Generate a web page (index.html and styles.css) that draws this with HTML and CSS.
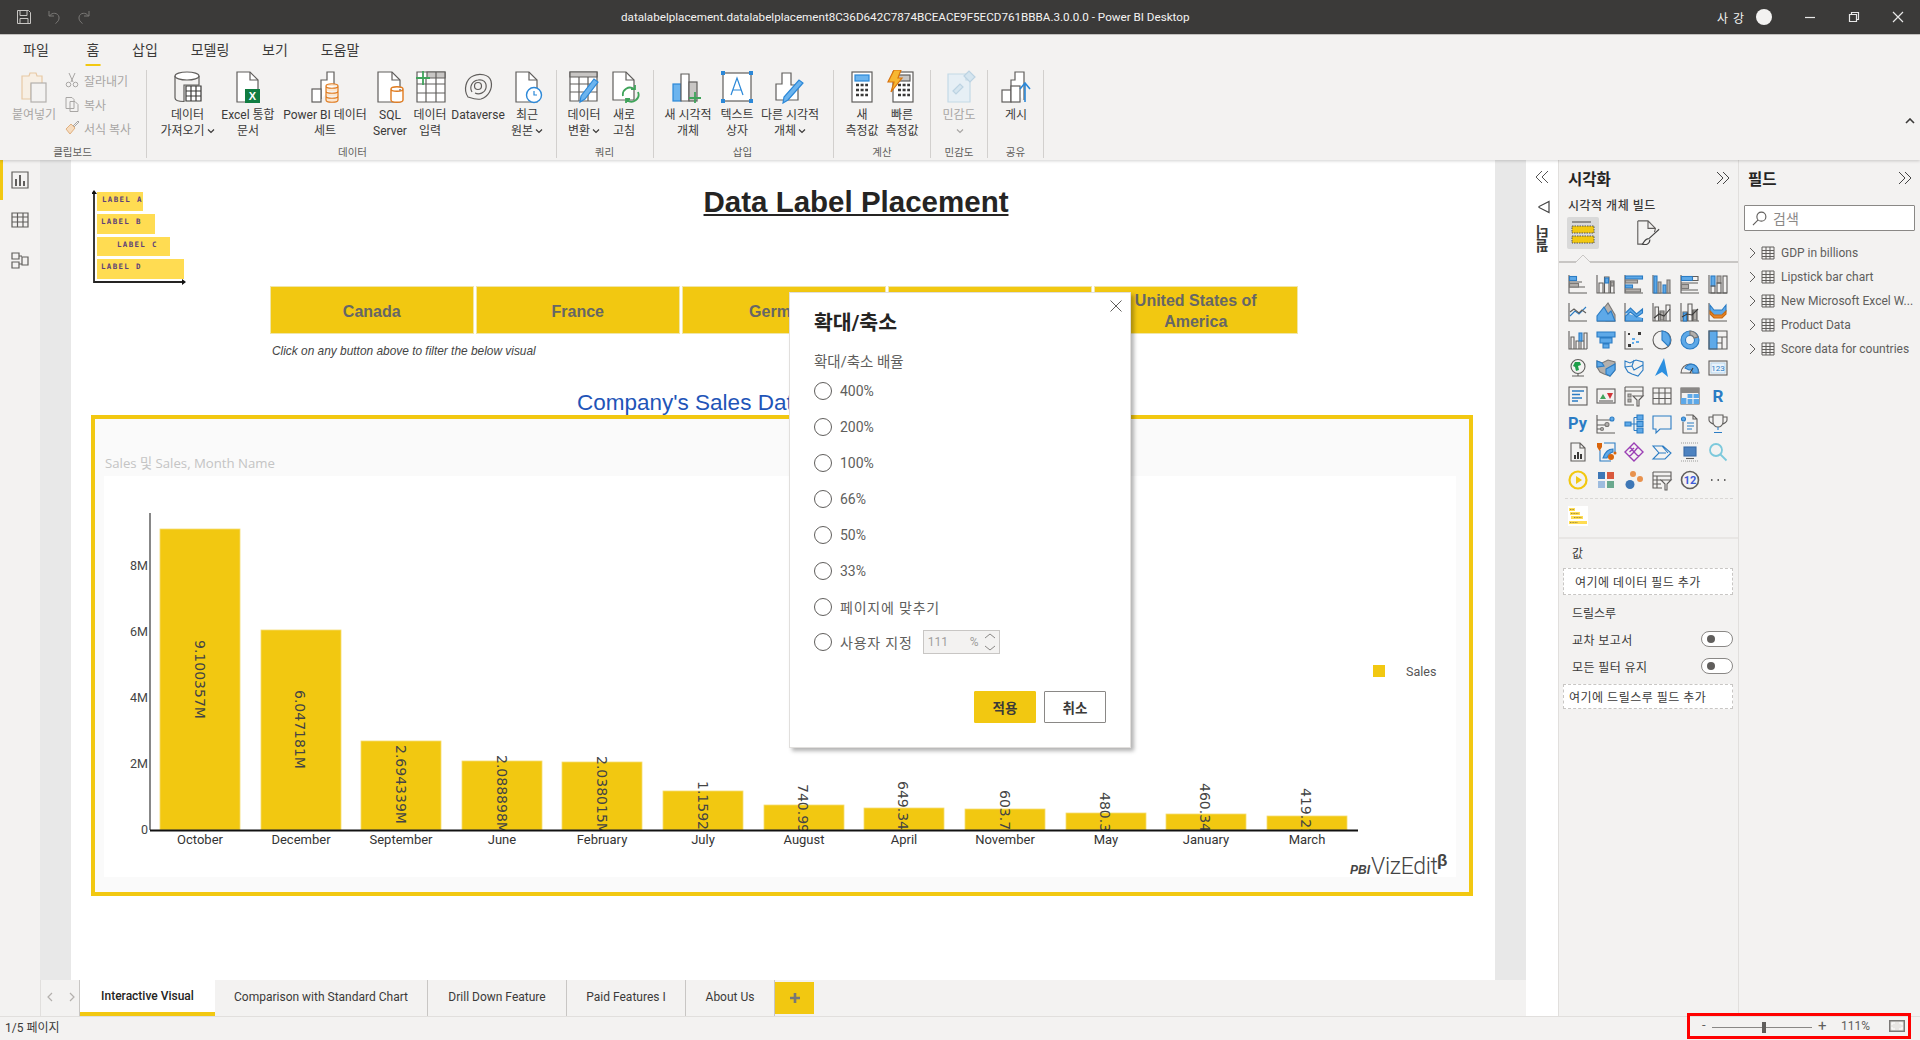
FILE: index.html
```html
<!DOCTYPE html>
<html lang="ko">
<head>
<meta charset="utf-8">
<title>Power BI Desktop</title>
<link rel="stylesheet" href="styles.css">
</head>
<body>
<div class="app">
  <header class="titlebar">
    <div class="qat">
      <svg class="tbi" viewBox="0 0 16 16"><path d="M1.5 1.5h11l2 2v11h-13zM4 1.5v5h7v-5M4 14.500v-5h8v5"/></svg>
      <svg class="tbi dim" viewBox="0 0 16 16"><path d="M3 2v5h5M3.500 7C6 3 12 3.500 13 8c.5 3-1.500 5-3.500 6.500"/></svg>
      <svg class="tbi dim" viewBox="0 0 16 16"><path d="M13 2v5H8M12.500 7C10 3 4 3.500 3 8c-.5 3 1.500 5 3.500 6.500"/></svg>
    </div>
    <div class="doc">datalabelplacement.datalabelplacement8C36D642C7874BCEACE9F5ECD761BBBA.3.0.0.0 - Power BI Desktop</div>
    <div class="win">
      <span class="user">사 강</span>
      <span class="avatar"></span>
      <svg class="wb first" viewBox="0 0 12 12"><path d="M1 6.500h10"/></svg>
      <svg class="wb" viewBox="0 0 12 12"><path d="M1.500 3.500h7v7h-7zM3.500 3.500v-2h7v7h-2"/></svg>
      <svg class="wb" viewBox="0 0 12 12"><path d="M1 1l10 10M11 1L1 11"/></svg>
    </div>
  </header>

  <section class="ribbon">
    <nav class="rtabs">
      <span class="t1">파일</span><span class="t2 on">홈</span><span class="t3">삽입</span><span class="t4">모델링</span><span class="t5">보기</span><span class="t6">도움말</span>
    </nav>
    <div class="groups">
      <div class="grp g-clip">
        <div class="btns">
          <div class="rb w60 off">
            <svg class="ri" viewBox="0 0 34 34"><path class="pale" d="M5 6h7l1-3h6l1 3h5v8H14v15H5z"/><rect class="paleb" x="14" y="13" width="15" height="19"/></svg>
            <span>붙여넣기</span>
          </div>
          <div class="small">
            <div class="si"><svg viewBox="0 0 16 16"><path d="M5 1l4 9M11 1L7 10"/><circle cx="4.500" cy="12.500" r="2.300"/><circle cx="11.500" cy="12.500" r="2.300"/></svg><span>잘라내기</span></div>
            <div class="si"><svg viewBox="0 0 16 16"><path d="M2 1.500h6l2 2v9H2zM6 5.500h5l3 3v7H6z"/></svg><span>복사</span></div>
            <div class="si"><svg viewBox="0 0 16 16"><path class="paleo" d="M2 9l5-5 4 4-5 6z"/><path d="M9 6l5-5 1 1-5 5"/></svg><span>서식 복사</span></div>
          </div>
        </div>
        <div class="glabel">클립보드</div>
      </div>

      <div class="grp g-data">
        <div class="btns">
          <div class="rb w61">
            <svg class="ri" viewBox="0 0 34 34"><path d="M4 6v22c0 2.500 4 3.500 9 3.500V15h15V6"/><ellipse class="w" cx="16" cy="6" rx="12" ry="4"/><path class="dk" d="M15 16h15v15H15zM15 21h15M15 26h15M20 16v15M25 16v15"/></svg>
            <span>데이터<br>가져오기<svg class="chev" viewBox="0 0 8 8"><path d="M1 2.500l3 3 3-3"/></svg></span>
          </div>
          <div class="rb w60">
            <svg class="ri" viewBox="0 0 34 34"><path class="w" d="M6 2h13l8 8v22H6z"/><path d="M19 2v8h8"/><rect class="xl" x="14" y="19" width="15" height="14"/><text class="xlt" x="21.500" y="30">X</text></svg>
            <span>Excel 통합<br>문서</span>
          </div>
          <div class="rb w94">
            <svg class="ri" viewBox="0 0 34 34"><path class="w" d="M13 29V10h6V2h7v14"/><rect class="w" x="4" y="19" width="9" height="13"/><path class="or" d="M18 16c0-3 12-3 12 0v14c0 3-12 3-12 0zM18 16c0 3 12 3 12 0M18 21c0 3 12 3 12 0M18 26c0 3 12 3 12 0"/></svg>
            <span>Power BI 데이터<br>세트</span>
          </div>
          <div class="rb w36">
            <svg class="ri" viewBox="0 0 34 34"><path class="w" d="M5 2h14l8 8v22H5z"/><path d="M19 2v8h8"/><path class="orw" d="M18 19c0-3 12-3 12 0v11c0 3-12 3-12 0zM18 19c0 3 12 3 12 0"/></svg>
            <span>SQL<br>Server</span>
          </div>
          <div class="rb w44">
            <svg class="ri" viewBox="0 0 34 34"><path class="w" d="M4 2h28v30H4z"/><path class="gf" d="M14 2h18v6H14z"/><path d="M4 14h28M4 23h28M13 8v24M23 2v30"/><path class="gr" d="M10 1v14M3 8h14"/></svg>
            <span>데이터<br>입력</span>
          </div>
          <div class="rb w52">
            <svg class="ri" viewBox="0 0 34 34"><path d="M7 27C2 20 5 9 12 6c6-3 16-2 18 5 2 8-3 16-10 18-5 1-10-1-13-2z"/><path d="M11 22c-3-5 0-11 6-12 5-1 9 2 8 8-1 5-7 7-11 5"/><circle cx="17" cy="16" r="3.500"/></svg>
            <span>Dataverse</span>
          </div>
          <div class="rb w46">
            <svg class="ri" viewBox="0 0 34 34"><path class="w" d="M6 2h13l8 8v22H6z"/><path d="M19 2v8h8"/><circle class="blc" cx="24" cy="25" r="7.500"/><path class="bl" d="M24 21v4h3"/></svg>
            <span>최근<br>원본<svg class="chev" viewBox="0 0 8 8"><path d="M1 2.500l3 3 3-3"/></svg></span>
          </div>
        </div>
        <div class="glabel">데이터</div>
      </div>

      <div class="grp g-query">
        <div class="btns">
          <div class="rb w40">
            <svg class="ri" viewBox="0 0 34 34"><path class="w" d="M3 2h27v29H3z"/><path class="gf" d="M3 2h27v5H3z"/><path d="M3 14h27M3 22h27M12 7v24M21 7v24"/><path class="blf" d="M13 32l1-6L27 9l4 3-13 17z"/></svg>
            <span>데이터<br>변환<svg class="chev" viewBox="0 0 8 8"><path d="M1 2.500l3 3 3-3"/></svg></span>
          </div>
          <div class="rb w40">
            <svg class="ri" viewBox="0 0 34 34"><path class="w" d="M6 2h13l8 8v20H6z"/><path d="M19 2v8h8"/><path class="gr" d="M16 26a7 7 0 0 1 11-7M31 22a7 7 0 0 1-11 8M28 15v4h-4M19 33v-4h4"/></svg>
            <span>새로<br>고침</span>
          </div>
        </div>
        <div class="glabel">쿼리</div>
      </div>

      <div class="grp g-ins">
        <div class="btns">
          <div class="rb w56">
            <svg class="ri" viewBox="0 0 34 34"><rect class="blf" x="2" y="14" width="8" height="17"/><path class="w" d="M10 31V4h8v27z"/><rect class="gf" x="18" y="12" width="8" height="19"/><path class="gr" d="M24 22v11M18 28h12"/></svg>
            <span>새 시각적<br>개체</span>
          </div>
          <div class="rb w42">
            <svg class="ri" viewBox="0 0 34 34"><rect class="w" x="3" y="3" width="28" height="28"/><path class="bl" d="M11 25l6-17 6 17M13 20h8"/><path class="bsq" d="M1 1h4v4H1zM29 1h4v4h-4zM1 29h4v4H1zM29 29h4v4h-4z"/></svg>
            <span>텍스트<br>상자</span>
          </div>
          <div class="rb w64">
            <svg class="ri" viewBox="0 0 34 34"><path class="w" d="M3 30V14h6V3h9v12h7v15z"/><path class="blf" d="M10 33l1-6L26 10l4 3-15 17z"/></svg>
            <span>다른 시각적<br>개체<svg class="chev" viewBox="0 0 8 8"><path d="M1 2.500l3 3 3-3"/></svg></span>
          </div>
        </div>
        <div class="glabel">삽입</div>
      </div>

      <div class="grp g-calc">
        <div class="btns">
          <div class="rb w40">
            <svg class="ri" viewBox="0 0 34 34"><rect class="w" x="7" y="2" width="20" height="30"/><rect class="blf" x="10" y="5" width="14" height="6"/><path class="dots" d="M11 15h12M11 20h12M11 25h12"/></svg>
            <span>새<br>측정값</span>
          </div>
          <div class="rb w40">
            <svg class="ri" viewBox="0 0 34 34"><rect class="w" x="8" y="2" width="20" height="30"/><rect class="gf" x="12" y="5" width="13" height="6"/><path class="dots" d="M13 15h12M13 20h12M13 25h12"/><path class="bolt" d="M9 0h7l-3 8h4L6 22l3-10H3z"/></svg>
            <span>빠른<br>측정값</span>
          </div>
        </div>
        <div class="glabel">계산</div>
      </div>

      <div class="grp g-sens">
        <div class="btns">
          <div class="rb w40 off">
            <svg class="ri" viewBox="0 0 34 34"><path class="pbl" d="M6 4h18v6h4v22H6z"/><path class="pbl2" d="M22 6l5-5 6 6-5 5zM11 21l7-7 3 3-7 7z"/></svg>
            <span>민감도<br><svg class="chev" viewBox="0 0 8 8"><path d="M1 2.500l3 3 3-3"/></svg></span>
          </div>
        </div>
        <div class="glabel">민감도</div>
      </div>

      <div class="grp g-share">
        <div class="btns">
          <div class="rb w40">
            <svg class="ri" viewBox="0 0 34 34"><path class="w" d="M12 20V10h4V2h9v28"/><rect class="w" x="3" y="20" width="9" height="12"/><rect class="w" x="12" y="16" width="9" height="16"/><path class="bl2" d="M26 32V14M21 19l5-6 5 6"/></svg>
            <span>게시</span>
          </div>
        </div>
        <div class="glabel">공유</div>
      </div>
      <svg class="collapse" viewBox="0 0 10 6"><path d="M1 5l4-4 4 4"/></svg>
    </div>
  </section>

  <main class="main">
    <aside class="leftnav">
      <div class="lni on"><svg viewBox="0 0 18 18"><path class="ln" d="M1 1h16v16H1z"/><path class="lf" d="M4 8h2v7H4zM8 4h2v11H8zM12 10h2v5h-2z"/></svg></div>
      <div class="lni"><svg viewBox="0 0 18 18"><path class="ln" d="M1 2h16v14H1zM1 6h16M1 11h16M6.500 2v14M12 2v14"/></svg></div>
      <div class="lni"><svg viewBox="0 0 18 18"><path class="ln" d="M1 2h7v6H1zM1 11h7v6H1zM11 6h6v8h-6zM8 5h3M8 13h3"/></svg></div>
    </aside>

    <div class="center">
      <div class="canvas">
        <div class="page">
          <h1 class="ptitle">Data Label Placement</h1>

          <svg class="logo" viewBox="92 188 98 98">
            <rect class="ly" x="97" y="192" width="46" height="19"/>
            <rect class="ly" x="97" y="214" width="58" height="20"/>
            <rect class="ly" x="97" y="237" width="73" height="19"/>
            <rect class="ly" x="97" y="259" width="87" height="20"/>
            <path class="lax" d="M94 192v90h90"/>
            <path class="lar" d="M94 190l-3 4h6zM186 282l-4-3v6z"/>
            <text class="lt" x="102" y="202">LABEL A</text>
            <text class="lt" x="101" y="224">LABEL B</text>
            <text class="lt" x="117" y="247">LABEL C</text>
            <text class="lt" x="101" y="269">LABEL D</text>
          </svg>

          <div class="slicer">
            <button class="sb">Canada</button>
            <button class="sb">France</button>
            <button class="sb">Germany</button>
            <button class="sb">United Kingdom</button>
            <button class="sb sb-tall">United States of<br>America</button>
          </div>
          <p class="hint">Click on any button above to filter the below visual</p>
          <h2 class="ctitle">Company's Sales Data by Month</h2>

          <div class="frame">
            <svg class="chart" viewBox="95 419 1374 473">
              <defs><clipPath id="plot"><rect x="150" y="500" width="1210" height="330"/></clipPath></defs>
              <rect class="plotbg" x="104" y="476" width="1352" height="401"/>
              <text class="ctl" x="105" y="468">Sales 및 Sales, Month Name</text>
              <g class="bars">
                <rect x="160" y="529" width="80" height="301"/>
                <rect x="261" y="630" width="80" height="200"/>
                <rect x="361" y="741" width="80" height="89"/>
                <rect x="462" y="761" width="80" height="69"/>
                <rect x="562" y="762" width="80" height="68"/>
                <rect x="663" y="791" width="80" height="39"/>
                <rect x="764" y="805" width="80" height="25"/>
                <rect x="864" y="808" width="80" height="22"/>
                <rect x="965" y="809" width="80" height="21"/>
                <rect x="1066" y="813" width="80" height="17"/>
                <rect x="1166" y="814" width="80" height="16"/>
                <rect x="1267" y="816" width="80" height="14"/>
              </g>
              <path class="yaxis" d="M150 513v317"/>
              <g class="ytick">
                <text x="148" y="570">8M</text>
                <text x="148" y="636">6M</text>
                <text x="148" y="702">4M</text>
                <text x="148" y="768">2M</text>
                <text x="148" y="834">0</text>
              </g>
              <g class="dl" clip-path="url(#plot)">
                <text transform="translate(195 640) rotate(90)">9.100357M</text>
                <text transform="translate(295 690) rotate(90)">6.047181M</text>
                <text transform="translate(396 745) rotate(90)">2.694339M</text>
                <text transform="translate(497 755) rotate(90)">2.088898M</text>
                <text transform="translate(597 756) rotate(90)">2.038015M</text>
                <text transform="translate(698 781) rotate(90)">1.159234M</text>
                <text transform="translate(798 784) rotate(90)">740.9941K</text>
                <text transform="translate(898 781) rotate(90)">649.3412K</text>
                <text transform="translate(1000 790) rotate(90)">603.7124K</text>
                <text transform="translate(1100 792) rotate(90)">480.3312K</text>
                <text transform="translate(1200 783) rotate(90)">460.3421K</text>
                <text transform="translate(1301 788) rotate(90)">419.2134K</text>
              </g>
              <path class="xaxis" d="M150 830.500H1358"/>
              <g class="cat">
                <text x="200" y="844">October</text>
                <text x="301" y="844">December</text>
                <text x="401" y="844">September</text>
                <text x="502" y="844">June</text>
                <text x="602" y="844">February</text>
                <text x="703" y="844">July</text>
                <text x="804" y="844">August</text>
                <text x="904" y="844">April</text>
                <text x="1005" y="844">November</text>
                <text x="1106" y="844">May</text>
                <text x="1206" y="844">January</text>
                <text x="1307" y="844">March</text>
              </g>
              <rect class="lg" x="1373" y="665" width="12" height="12"/>
              <text class="lgt" x="1406" y="676">Sales</text>
              <text class="wm1" x="1350" y="874">PBI</text>
              <text class="wm2" x="1371" y="874">VizEdit</text>
              <text class="wm3" x="1437" y="866">β</text>
            </svg>
          </div>
        </div>
      </div>
      <div class="pagetabs">
        <div class="pnav"><svg viewBox="0 0 6 10"><path d="M5 1L1 5l4 4"/></svg><svg viewBox="0 0 6 10"><path d="M1 1l4 4-4 4"/></svg></div>
        <div class="ptab on tw1">Interactive Visual</div>
        <div class="ptab tw2">Comparison with Standard Chart</div>
        <div class="ptab tw3">Drill Down Feature</div>
        <div class="ptab tw4">Paid Features I</div>
        <div class="ptab tw5">About Us</div>
        <div class="padd"><svg viewBox="0 0 12 12"><path d="M6 1v10M1 6h10"/></svg></div>
      </div>
    </div>

    <aside class="filters">
      <svg class="fchev" viewBox="0 0 14 14"><path d="M7 1L1 7l6 6M13 1L7 7l6 6"/></svg>
      <svg class="fmega" viewBox="0 0 14 14"><path d="M12 1.500v11L2 7.500v-1z"/></svg>
      <span class="fword">필터</span>
    </aside>

    <aside class="viz">
      <div class="phead"><h3>시각화</h3><svg class="pchev" viewBox="0 0 14 14"><path d="M7 1l6 6-6 6M1 1l6 6-6 6"/></svg></div>
      <div class="vsub">시각적 개체 빌드</div>
      <div class="vbuild">
        <div class="vb on"><svg viewBox="0 0 26 26"><path class="d" d="M2 2h19"/><rect class="yb" x="2" y="6" width="22" height="7"/><rect class="yb" x="2" y="16" width="22" height="7"/></svg></div>
        <div class="vb"><svg viewBox="0 0 28 28"><path d="M3 1h11l8 8-1 4M14 1v8h8M3 1v25h6"/><path class="fbr" d="M26 10L15 20M15 20c-4 0-5 3-7 6 4 1 8 0 8-5"/></svg></div>
      </div>
      <div class="vline"><svg class="caret" viewBox="0 0 16 9"><path d="M0 9l8-8 8 8"/></svg></div>

      <div class="igrid">
        <svg viewBox="0 0 20 20"><path d="M1 1v18h18M1 8h13M1 13h16"/><rect class="b" x="1.500" y="2.500" width="7" height="4"/><rect class="g" x="1.500" y="9.500" width="9" height="3.500"/></svg>
        <svg viewBox="0 0 20 20"><path d="M1 1v18h18M3 19V9h4v10M8.500 19V3h4.500v16M14.500 19V7H18v12"/><rect class="b" x="9" y="4" width="3.500" height="5"/><rect class="g" x="15" y="8" width="2.500" height="4"/></svg>
        <svg viewBox="0 0 20 20"><path d="M1 1v18h18"/><rect class="b" x="1.500" y="2" width="17" height="3"/><rect class="g" x="1.500" y="6" width="12" height="3"/><rect class="b" x="1.500" y="11" width="7" height="3"/><rect class="g" x="1.500" y="15" width="15" height="3"/></svg>
        <svg viewBox="0 0 20 20"><path d="M1 1v18h18"/><rect class="b" x="2" y="2" width="3" height="17"/><rect class="g" x="6" y="8" width="3" height="11"/><rect class="b" x="11" y="11" width="3" height="8"/><rect class="g" x="15" y="6" width="3" height="13"/></svg>
        <svg viewBox="0 0 20 20"><path d="M1 1v18h18M1 9h17M1 16h17"/><rect class="b" x="1.500" y="2.500" width="11" height="4"/><path d="M12.500 2.500H18v4h-5.500"/><rect class="g" x="1.500" y="10.500" width="7" height="4"/></svg>
        <svg viewBox="0 0 20 20"><path d="M1 1v18h18"/><rect class="b" x="3" y="2" width="4" height="10"/><rect x="3" y="12" width="4" height="7"/><rect class="g" x="9" y="2" width="4" height="7"/><rect x="9" y="9" width="4" height="10"/><rect x="15" y="2" width="4" height="17"/></svg>

        <svg viewBox="0 0 20 20"><path d="M1 1v18h18"/><path class="l" d="M2 14l5-5 4 3 7-7"/><path d="M2 10l4-3 5 4 3-3 4 3"/></svg>
        <svg viewBox="0 0 20 20"><path d="M1 19h18"/><path class="g" d="M8 6l4-5 7 12v6H10z"/><path class="b" d="M1 19v-5l7-9 4 7 3-3 4 10z"/></svg>
        <svg viewBox="0 0 20 20"><path d="M1 1v18h18"/><path class="b" d="M1.500 11l5-5 6 6 6-5v4l-6 4-6-5-5 4v5h17v-3"/></svg>
        <svg viewBox="0 0 20 20"><path d="M1 1v18h18M3 19V5h3.500v14M8 19V9h4v10M14 19V3h4v16"/><rect class="g" x="8.500" y="10" width="3" height="8"/><path class="k" d="M2 16l5-4 5 2 6-7"/></svg>
        <svg viewBox="0 0 20 20"><path d="M1 1v18h18M3 19V10h4v9M8 19V2h4v17M13 19V8h4v11"/><rect class="b" x="3.500" y="11" width="3" height="8"/><rect class="g" x="13.500" y="9" width="3" height="9"/><path class="k" d="M2 15l5-3 5 1 6-6"/></svg>
        <svg viewBox="0 0 20 20"><path d="M1 1v18h18"/><path class="b" d="M2 3l4 5h8l4-5v6l-4 5H6L2 9z"/><path class="o" d="M2 9l4 4h8l4-4v3l-4 4H6l-4-4z"/></svg>

        <svg viewBox="0 0 20 20"><path d="M1 1v18h18M3 19V7h3v12M8 19v-8h3v8M13 19V11h3v8M16 19V3h3v16"/><rect class="b" x="11" y="3" width="3" height="8"/></svg>
        <svg viewBox="0 0 20 20"><path class="b" d="M1 2h18v5H1zM4 8h12v5H4zM7 14h6v4H7z"/></svg>
        <svg viewBox="0 0 20 20"><path d="M1 1v18h18"/><path class="kf" d="M4 3h2v2H4zM14 2h3v3h-3zM4 14h3v3H4z"/><path class="bf" d="M8 8h3v2H8zM12 11h3v2h-3zM8 12h2v2H8z"/></svg>
        <svg viewBox="0 0 20 20"><circle cx="10" cy="10" r="9"/><path class="b" d="M10 1a9 9 0 0 1 6 15l-6-6z"/></svg>
        <svg viewBox="0 0 20 20"><circle class="b" cx="10" cy="10" r="9"/><circle class="wh" cx="10" cy="10" r="4.500"/><path class="g" d="M10 1a9 9 0 0 1 8 6l-4 1a4.500 4.500 0 0 0-4-3z"/></svg>
        <svg viewBox="0 0 20 20"><rect class="b" x="1" y="1" width="8" height="18"/><path d="M1 1h18v18H1zM9 7h10M14 7v12M9 13h5"/></svg>

        <svg viewBox="0 0 20 20"><circle cx="10" cy="8.500" r="7"/><path class="gn" d="M7 4h5l1 3-3 1 1 4-3 1-1-4-2-1z"/><path d="M4 18h12M10 15.500V18"/></svg>
        <svg viewBox="0 0 20 20"><path class="g" d="M1 3l5 2 6-3 7 2v8l-5 6-6-2-4-2-3-5z"/><path class="b" d="M10 11l9-5v6l-5 6-4-2z"/><path class="b" d="M1 3l5 2 2 3-7 1z"/></svg>
        <svg viewBox="0 0 20 20"><path class="l" d="M1 3l5 2 6-3 7 2v8l-5 6-6-2-4-2-3-5zM1 9l7-1 2 4 9-5M8 8l2-6"/></svg>
        <svg viewBox="0 0 20 20"><path class="bn" d="M12 0L3 18l7-4 6 5z"/></svg>
        <svg viewBox="0 0 20 20"><path d="M1 15a9 9 0 0 1 18 0z"/><path class="b" d="M5 10a7 7 0 0 1 13 5h-5a3 3 0 0 0-4-3z"/><path d="M10 15l3-5" class="k"/></svg>
        <svg viewBox="0 0 20 20"><rect x="1" y="3" width="18" height="14"/><rect class="lb" x="3" y="5" width="14" height="10"/><text class="t123" x="10" y="13">123</text></svg>

        <svg viewBox="0 0 20 20"><rect x="1" y="1" width="18" height="18"/><path class="l2" d="M4 5h12M4 8.500h8M4 12h10M4 15h6"/></svg>
        <svg viewBox="0 0 20 20"><rect x="1" y="3" width="18" height="14"/><path class="gt" d="M4 13l3-5 3 5z"/><path class="rt" d="M11 7h6l-3 6z"/><path d="M3 15h14"/></svg>
        <svg viewBox="0 0 20 20"><path d="M1 1h18v9M1 1v18h9M1 5h18"/><path class="g" d="M4 8h3v3H4zM4 13h3v3H4z"/><path class="fn" d="M9 10h10l-4 4v6h-2v-6z"/></svg>
        <svg viewBox="0 0 20 20"><path d="M1 2h18v16H1zM1 7h18M1 12.500h18M7 2v16M13 2v16"/></svg>
        <svg viewBox="0 0 20 20"><path d="M1 2h18v16H1z"/><path class="gf2" d="M1 2h18v5H1z"/><path class="bf" d="M7 8h12v10H7zM1 12h6v6H1z"/><path class="wl" d="M7 12.500h12M13 8v10M7 8v10"/></svg>
        <svg viewBox="0 0 20 20"><text class="tr" x="10" y="16">R</text></svg>

        <svg viewBox="0 0 22 20"><text class="tpy" x="0" y="15">Py</text></svg>
        <svg viewBox="0 0 20 20"><path d="M1 1v18h18M1 6h13M1 11h8M1 15h4"/><circle class="b" cx="16" cy="5" r="2"/><circle class="g" cx="11" cy="10.500" r="2"/><circle class="g" cx="6" cy="15" r="1.500"/></svg>
        <svg viewBox="0 0 20 20"><path class="b" d="M1 8h6v4H1zM13 1h6v5h-6zM13 7.500h6v5h-6zM13 14h6v5h-6z"/><path class="l" d="M7 10h3M10 3.500V16.500M10 3.500h3M10 10h3M10 16.500h3"/></svg>
        <svg viewBox="0 0 20 20"><path class="l" d="M1 2h18v13H8l-4 4v-4H1z"/></svg>
        <svg viewBox="0 0 20 20"><path d="M3 8v11h14V5l-4-4H6M13 1v4h4"/><circle class="b" cx="3.500" cy="5" r="2"/><path class="l" d="M7 9h7M7 12h7M7 15h5"/></svg>
        <svg viewBox="0 0 20 20"><path d="M5 1h10v7a5 5 0 0 1-10 0zM5 3H1v3c0 2 2 3 4 4M15 3h4v3c0 2-2 3-4 4"/><path class="l" d="M10 13v3M6 18.500h8"/></svg>

        <svg viewBox="0 0 20 20"><path d="M3 1h9l5 5v13H3zM12 1v5h5"/><path class="kf" d="M6 13h2v4H6zM9 10h2v7H9zM12 12h2v5h-2z"/></svg>
        <svg viewBox="0 0 20 20"><path class="l" d="M4 8v11h11M8 1h11v10"/><path class="b" d="M7 16c2-6 5-9 10-9v3c-4 1-5 3-6 6z"/><path class="o2" d="M1 1h5v4L3.500 9 1 5z"/><circle class="o2" cx="15" cy="15" r="3"/><circle class="o2" cx="19" cy="11" r="1.500"/></svg>
        <svg viewBox="0 0 20 20"><path class="pp" d="M10 1l9 9-9 9-9-9zM10 1l4 4-4 5-4-5zM5.500 10L10 6M10 10l4.500 4.500-4.500 4.500-4.500-4.500z"/></svg>
        <svg viewBox="0 0 20 20"><path class="l" d="M1 4h10l8 7-6 6H1l6-6zM7 11h7M10 4l6 7"/></svg>
        <svg viewBox="0 0 20 20"><path class="dsh" d="M1 1h18M1 19h18"/><rect class="bd" x="4" y="5" width="12" height="9"/><path d="M6 16.500h8"/></svg>
        <svg viewBox="0 0 20 20"><circle class="tl" cx="8" cy="8" r="6"/><path class="tl" d="M12.500 12.500l6 6"/></svg>

        <svg viewBox="0 0 20 20"><circle class="yr" cx="10" cy="10" r="8.500"/><path class="ypl" d="M8 6l6 4-6 4z"/></svg>
        <svg viewBox="0 0 20 20"><path class="c1" d="M2 2h7v7H2z"/><path class="c2" d="M11 2h7v7h-7z"/><path class="c3" d="M2 11h7v7H2z"/><path class="c4" d="M11 11h7v7h-7z"/></svg>
        <svg viewBox="0 0 20 20"><circle class="c1" cx="6" cy="14.500" r="4.500"/><circle class="c5" cx="9" cy="4" r="3"/><circle class="c5" cx="16" cy="9" r="3"/></svg>
        <svg viewBox="0 0 20 20"><path d="M1 2h18v8M1 2v16h9M1 6h18M1 10h8M1 14h8M5 6v12"/><path class="fn2" d="M9 10h10l-4 4v6h-2v-6z"/></svg>
        <svg viewBox="0 0 20 20"><circle class="thick" cx="10" cy="10" r="8.500"/><text class="t12" x="10" y="14">12</text></svg>
        <svg viewBox="0 0 20 20"><path class="k3" d="M3 10h1.500M9.500 10h1.500M16 10h1.500"/></svg>
      </div>

      <div class="vdash"></div>
      <svg class="cvis" viewBox="0 0 20 20">
        <rect class="cw" width="20" height="20"/>
        <path class="cy" d="M1 2h6v3H1zM2 6h10v3H2zM3 10h12v3H3zM1 15h18v3H1z"/>
        <path class="cd" d="M2 3.500h4M3 7.500h8M6 11.500h8M2 16.500h8"/>
      </svg>
      <div class="vsep"></div>
      <div class="flab lab-v">값</div>
      <div class="dz dz1">여기에 데이터 필드 추가</div>
      <div class="flab lab-d">드릴스루</div>
      <div class="trow tr1"><span>교차 보고서</span><span class="tog"></span></div>
      <div class="trow tr2"><span>모든 필터 유지</span><span class="tog"></span></div>
      <div class="dz dz2">여기에 드릴스루 필드 추가</div>
    </aside>

    <aside class="fields">
      <div class="phead"><h3>필드</h3><svg class="pchev" viewBox="0 0 14 14"><path d="M7 1l6 6-6 6M1 1l6 6-6 6"/></svg></div>
      <div class="search"><svg viewBox="0 0 16 16"><circle cx="10" cy="6" r="4.800"/><path d="M6.500 9.500L1 15"/></svg><span>검색</span></div>
      <ul class="flist">
        <li><svg class="fa" viewBox="0 0 7 12"><path d="M1 1l5 5-5 5"/></svg><svg class="tb" viewBox="0 0 14 14"><path d="M1 1h12v12H1zM1 4.500h12M1 7.500h12M1 10.500h12M5 1v12M9 1v12"/></svg><span>GDP in billions</span></li>
        <li><svg class="fa" viewBox="0 0 7 12"><path d="M1 1l5 5-5 5"/></svg><svg class="tb" viewBox="0 0 14 14"><path d="M1 1h12v12H1zM1 4.500h12M1 7.500h12M1 10.500h12M5 1v12M9 1v12"/></svg><span>Lipstick bar chart</span></li>
        <li><svg class="fa" viewBox="0 0 7 12"><path d="M1 1l5 5-5 5"/></svg><svg class="tb" viewBox="0 0 14 14"><path d="M1 1h12v12H1zM1 4.500h12M1 7.500h12M1 10.500h12M5 1v12M9 1v12"/></svg><span>New Microsoft Excel W...</span></li>
        <li><svg class="fa" viewBox="0 0 7 12"><path d="M1 1l5 5-5 5"/></svg><svg class="tb" viewBox="0 0 14 14"><path d="M1 1h12v12H1zM1 4.500h12M1 7.500h12M1 10.500h12M5 1v12M9 1v12"/></svg><span>Product Data</span></li>
        <li><svg class="fa" viewBox="0 0 7 12"><path d="M1 1l5 5-5 5"/></svg><svg class="tb" viewBox="0 0 14 14"><path d="M1 1h12v12H1zM1 4.500h12M1 7.500h12M1 10.500h12M5 1v12M9 1v12"/></svg><span>Score data for countries</span></li>
      </ul>
    </aside>
  </main>

  <footer class="status"><span>1/5 페이지</span></footer>
  <div class="zoombox">
    <span class="zm">-</span>
    <span class="slider"><i></i></span>
    <span class="zp">+</span>
    <span class="zv">111%</span>
    <svg class="fit" viewBox="0 0 16 12"><rect x=".75" y=".75" width="14.500" height="10.500" class="fo"/><path class="fi" d="M3 5V3h3M10 3h3v2M13 7v2h-3M6 9H3V7"/></svg>
  </div>

  <div class="modal">
    <svg class="mclose" viewBox="0 0 12 12"><path d="M.5.500l11 11M11.500.5l-11 11"/></svg>
    <h2 class="mtitle">확대/축소</h2>
    <div class="mlabel">확대/축소 배율</div>
    <div class="mrow"><span class="radio"></span>400%</div>
    <div class="mrow"><span class="radio"></span>200%</div>
    <div class="mrow"><span class="radio"></span>100%</div>
    <div class="mrow"><span class="radio"></span>66%</div>
    <div class="mrow"><span class="radio"></span>50%</div>
    <div class="mrow"><span class="radio"></span>33%</div>
    <div class="mrow ko"><span class="radio"></span>페이지에 맞추기</div>
    <div class="mrow ko"><span class="radio"></span>사용자 지정
      <span class="custom"><b>111</b><em>%</em><svg viewBox="0 0 12 20"><path d="M1 6l5-4 5 4M1 14l5 4 5-4"/></svg></span>
    </div>
    <div class="mbtns"><button class="apply">적용</button><button class="cancel">취소</button></div>
  </div>
</div>
</body>
</html>
```
FILE: styles.css
```css
* { box-sizing: border-box; }
html, body { margin: 0; padding: 0; }
body { font-family: Roboto, "Noto Sans CJK KR", sans-serif; color: #3b3a39; }
svg { display: block; fill: none; }
.app { position: relative; width: 1920px; height: 1040px; overflow: hidden; display: flex; flex-direction: column; background: #f3f2f1; }

/* title bar */
.titlebar { height: 35px; flex: none; background: #3b3a39; border-bottom: 1px solid #c8c6c4; display: flex; align-items: center; color: #f3f2f1; position: relative; }
.qat { display: flex; gap: 14px; padding-left: 16px; width: 120px; }
.tbi { width: 16px; height: 16px; stroke: #c8c6c4; stroke-width: 1; }
.tbi.dim { stroke: #7a7876; }
.doc { position: absolute; left: 621px; top: 9px; font-size: 11.650px; line-height: 16px; white-space: nowrap; }
.win { margin-left: auto; display: flex; align-items: center; }
.user { font-size: 12px; letter-spacing: 1px; margin-right: 11px; }
.avatar { width: 16px; height: 16px; background: #f3f2f1; border-radius: 50%; margin-right: 32px; }
.wb { width: 12px; height: 12px; stroke: #e8e8e8; stroke-width: 1.2; margin-right: 32px; }
.wb:last-child { margin-right: 16px; }

/* ribbon */
.ribbon { height: 125px; flex: none; background: #f3f2f1; box-shadow: 0 1px 3px rgba(0,0,0,.18); position: relative; z-index: 2; }
.rtabs { height: 35px; position: relative; font-size: 14px; line-height: 28px; }
.rtabs span { position: absolute; top: 1px; white-space: nowrap; transform: translateX(-50%); }
.t1 { left: 36px; } .t2 { left: 93px; } .t3 { left: 145px; } .t4 { left: 210px; } .t5 { left: 275px; } .t6 { left: 340px; }
.rtabs .on::after { content: ""; position: absolute; left: -1px; right: -1px; bottom: -2px; height: 2px; background: #f2c811; }
.groups { display: flex; height: 88px; position: relative; }
.grp { height: 88px; border-right: 1px solid #d2d0ce; display: flex; flex-direction: column; }
.g-clip { width: 147px; }
.g-data { width: 410px; padding-left: 10px; }
.g-query { width: 97px; padding-left: 7px; }
.g-ins { width: 180px; padding-left: 6px; }
.g-calc { width: 97px; padding-left: 8px; }
.g-sens { width: 57px; padding-left: 8px; }
.g-share { width: 56px; padding-left: 8px; }
.btns { height: 76px; display: flex; flex: none; }
.glabel { font-size: 10.500px; line-height: 14px; text-align: center; color: #605e5c; white-space: nowrap; }
.g-clip .glabel { padding-right: 1px; }
.g-data .glabel, .g-query .glabel, .g-ins .glabel, .g-calc .glabel, .g-sens .glabel, .g-share .glabel { margin-left: -8px; }
.rb { display: flex; flex-direction: column; align-items: center; font-size: 12px; line-height: 16px; text-align: center; white-space: nowrap; flex: none; color: #3b3a39; }
.rb > span { margin-top: 3px; }
.rb.off { color: #a8a6a4; }
.w36 { width: 36px; } .w40 { width: 40px; } .w42 { width: 42px; } .w44 { width: 44px; } .w46 { width: 46px; }
.w52 { width: 52px; } .w56 { width: 56px; } .w60 { width: 60px; } .w61 { width: 61px; } .w64 { width: 64px; } .w94 { width: 94px; }
.w60.off { margin-left: 4px; }
.ri { width: 34px; height: 34px; stroke: #605e5c; stroke-width: 1.2; }
.chev { display: inline-block; width: 8px; height: 8px; stroke: #3b3a39; stroke-width: 1.2; margin-left: 2px; }
.off .chev { stroke: #a8a6a4; }
.small { display: flex; flex-direction: column; color: #a8a6a4; font-size: 12px; margin-top: -2px; }
.si { height: 24px; display: flex; align-items: center; gap: 4px; white-space: nowrap; }
.si svg { width: 16px; height: 16px; stroke: #a8a6a4; stroke-width: 1; }
.pale { stroke: #e8c9a4; fill: #f7efe4; }
.paleb { stroke: #b3b0ad; fill: #f3f2f1; }
.paleo { fill: #f6dcbf; stroke: #e0b080; }
.w { fill: #fff; }
.dk { fill: #fff; stroke: #3b3a39; }
.xl { fill: #107c41; stroke: none; }
.xlt { fill: #fff; stroke: none; font: bold 11px "Liberation Sans", sans-serif; text-anchor: middle; }
.or { fill: #fbe6cf; stroke: #e07b1f; }
.orw { fill: #fff; stroke: #e07b1f; stroke-width: 1.4; }
.gf { fill: #c8c6c4; }
.gr { stroke: #3fa45b; stroke-width: 1.8; }
.blc { fill: #fff; stroke: #2b88d8; stroke-width: 1.4; }
.bl { stroke: #2b88d8; stroke-width: 1.2; }
.bl2 { stroke: #2b88d8; stroke-width: 1.6; }
.blf { fill: #6cb4ee; stroke: #2b88d8; }
.bsq { fill: #2b88d8; stroke: none; }
.dots { stroke: #3b3a39; stroke-width: 2.4; stroke-dasharray: 3 1.6; }
.bolt { fill: #f7b731; stroke: #d9730d; }
.pbl { fill: #e6eff5; stroke: #c3d9e6; }
.pbl2 { fill: #d5e5ef; stroke: #bcd3e2; }
.collapse { position: absolute; right: 5px; top: 48px; width: 10px; height: 6px; stroke: #3b3a39; stroke-width: 1.6; }

/* main */
.main { flex: 1; min-height: 0; display: flex; }
.leftnav { width: 40px; flex: none; background: #f3f2f1; }
.lni { height: 40px; display: flex; align-items: center; justify-content: center; }
.lni.on { box-shadow: inset 3px 0 0 #f2c811; }
.lni svg { width: 18px; height: 18px; }
.ln { stroke: #605e5c; stroke-width: 1.2; }
.lf { fill: #605e5c; }
.center { flex: 1; min-width: 0; display: flex; flex-direction: column; }
.canvas { flex: 1; min-height: 0; background: #e8e8e8; padding: 0 31px; }
.page { position: relative; width: 1424px; height: 100%; background: #fff; }
.ptitle { position: absolute; left: 514px; top: 22px; width: 542px; margin: 0; text-align: center; font: bold 29.500px/40px "Liberation Sans", sans-serif; color: #252423; text-decoration: underline; }
.logo { position: absolute; left: 21px; top: 28px; width: 98px; height: 98px; }
.ly { fill: #ffdc52; }
.lax { stroke: #252423; stroke-width: 1.8; }
.lar { fill: #111; }
.lt { font: bold 7.500px "DejaVu Sans Mono", monospace; fill: #5d3f78; letter-spacing: 1.300px; }
.slicer { position: absolute; left: 199px; top: 126px; display: flex; gap: 2.500px; }
.sb { width: 203.500px; height: 48px; background: #f2c811; border: 1px solid #f0e6a8; padding: 3px 0 0; font: bold 16px/22px "Liberation Sans", sans-serif; color: #666; }
.sb-tall { line-height: 21px; padding-top: 1px; }
.hint { position: absolute; left: 201px; top: 183px; margin: 0; font: italic 11.900px/16px "Liberation Sans", sans-serif; color: #444; white-space: nowrap; }
.ctitle { position: absolute; left: 506px; top: 230px; margin: 0; font: 400 22.500px/26px "Liberation Sans", sans-serif; color: #1f55b8; white-space: nowrap; }
.frame { position: absolute; left: 20px; top: 255px; width: 1382px; height: 481px; border: 4px solid #f2c811; background: #fafafa; }
.chart { width: 1374px; height: 473px; }
.plotbg { fill: #fff; }
.ctl { font: 13.200px "Open Sans", "Noto Sans CJK KR", sans-serif; fill: #c4c4c4; }
.bars rect { fill: #f2c811; stroke: #f6dd72; stroke-width: .8; }
.yaxis { stroke: #555; stroke-width: 1.4; }
.xaxis { stroke: #111; stroke-width: 2; }
.ytick text { font: 12.500px Roboto, sans-serif; fill: #444; text-anchor: end; }
.cat text { font: 13px Roboto, sans-serif; fill: #333; text-anchor: middle; }
.dl text { font: 14px "DejaVu Sans", sans-serif; fill: #444; }
.lg { fill: #f2c811; }
.lgt { font: 12.500px Roboto, sans-serif; fill: #555; }
.wm1 { font: italic bold 12px "Liberation Sans", sans-serif; fill: #444; }
.wm2 { font: 300 23px Roboto, sans-serif; fill: #444; letter-spacing: -.3px; }
.wm3 { font: bold 17px "Liberation Sans", sans-serif; fill: #444; }

/* page tabs */
.pagetabs { height: 36px; flex: none; display: flex; background: #f3f2f1; font-size: 12px; }
.pnav { width: 40px; flex: none; display: flex; align-items: center; gap: 16px; padding-left: 6px; padding-bottom: 2px; border-left: 1px solid #e1dfdd; border-right: 1px solid #c8c6c4; }
.pnav svg { width: 6px; height: 10px; stroke: #b3b0ad; stroke-width: 1.2; }
.ptab { display: flex; align-items: center; justify-content: center; border-right: 1px solid #c8c6c4; white-space: nowrap; padding-bottom: 2px; color: #3b3a39; }
.ptab.on { background: #fff; border-bottom: 4px solid #f2c811; border-right: 0; padding-bottom: 0; font-weight: 500; color: #252423; }
.tw1 { width: 135px; } .tw2 { width: 213px; } .tw3 { width: 139px; } .tw4 { width: 119px; } .tw5 { width: 89px; background: #f3f2f1; }
.padd { width: 39px; height: 32px; margin-top: 2px; background: #f2c811; display: flex; align-items: center; justify-content: center; }
.padd svg { width: 12px; height: 12px; stroke: #777; stroke-width: 2.6; }

/* filters strip */
.filters { width: 32px; flex: none; background: #fff; display: flex; flex-direction: column; align-items: center; }
.fchev { width: 14px; height: 14px; stroke: #555; stroke-width: 1; margin-top: 10px; }
.fmega { width: 14px; height: 14px; stroke: #444; stroke-width: 1.2; margin-top: 16px; margin-left: 4px; }
.fword { writing-mode: vertical-rl; transform: rotate(180deg); font-size: 14px; font-weight: 700; color: #3b3a39; margin-top: 11px; line-height: 18px; margin-left: 2px; }

/* viz pane */
.viz { width: 181px; flex: none; background: #f3f2f1; border-left: 1px solid #e1dfdd; border-right: 1px solid #e1dfdd; display: flex; flex-direction: column; }
.phead { height: 36px; display: flex; align-items: center; justify-content: space-between; padding-left: 9px; padding-right: 8px; flex: none; }
.phead h3 { margin: 0; font-size: 15.500px; font-weight: 700; color: #252423; }
.pchev { width: 14px; height: 14px; stroke: #444; stroke-width: 1; }
.vsub { font-size: 12px; line-height: 18px; padding: 1px 0 0 9px; font-weight: 500; flex: none; letter-spacing: .5px; white-space: nowrap; height: 18px; }
.vbuild { display: flex; gap: 17px; margin-top: 3px; padding-left: 8px; flex: none; }
.vb { width: 32px; height: 32px; display: flex; align-items: center; justify-content: center; }
.vb.on { background: #d9d9d9; border-radius: 2px; }
.vb + .vb { margin-left: 16px; }
.vb svg { width: 26px; height: 26px; stroke: #605e5c; stroke-width: 1.2; }
.vb .d { stroke: #605e5c; }
.yb { fill: #f2c811; stroke: #555; stroke-dasharray: 1.5 1; stroke-width: 1; }
.fbr { stroke: #444; stroke-width: 1.2; }
.vline { height: 14px; border-bottom: 2px solid #c8c6c4; position: relative; flex: none; }
.caret { position: absolute; left: 16px; bottom: -2px; width: 16px; height: 9px; stroke: #c8c6c4; fill: #f3f2f1; stroke-width: 1; }
.igrid { display: grid; grid-template-columns: repeat(6, 28px); grid-auto-rows: 28px; padding-left: 5px; margin-top: 7px; flex: none; justify-items: center; align-items: center; }
.igrid svg { width: 20px; height: 20px; stroke: #605e5c; stroke-width: 1.1; overflow: visible; }
.b { fill: #5ea9e8; stroke: #2b7cc4; }
.g { fill: #b3b0ad; stroke: #7a7876; }
.l { stroke: #2b7cc4; }
.l2 { stroke: #2b7cc4; stroke-width: 1.600; }
.k { stroke: #3b3a39; }
.o { fill: #e8862a; stroke: #c96a10; }
.o2 { fill: #d9650c; stroke: none; }
.kf { fill: #3b3a39; stroke: none; }
.bf { fill: #5ea9e8; stroke: none; }
.wh { fill: #f3f2f1; stroke: #2b7cc4; }
.gn { fill: #1e9e4a; stroke: none; }
.bn { fill: #2b8fe0; stroke: none; }
.lb { fill: #e9f3fb; stroke: #9cc6e8; stroke-width: .6; }
.t123 { font: 8px Roboto, sans-serif; fill: #2b7cc4; stroke: none; text-anchor: middle; }
.gt { fill: #3fa45b; stroke: none; }
.rt { fill: #d13438; stroke: none; }
.fn { fill: #f3f2f1; stroke: #605e5c; }
.fn2 { fill: #f3f2f1; stroke: #605e5c; }
.gf2 { fill: #8a8886; stroke: none; }
.wl { stroke: #f3f2f1; }
.tr { font: bold 17px Roboto, sans-serif; fill: #2b7cc4; stroke: none; text-anchor: middle; }
.tpy { font: bold 18px Roboto, sans-serif; fill: #2b7cc4; stroke: none; }
.pp { stroke: #9b3fb5; stroke-width: 1.4; }
.dsh { stroke: #999; stroke-dasharray: 1 1; }
.bd { fill: #4d82c0; stroke: #3a6ba5; }
.tl { stroke: #7cc9dc; stroke-width: 1.800; }
.yr { stroke: #f2c811; stroke-width: 2.200; }
.ypl { fill: #f2c811; stroke: none; }
.c1 { fill: #3e77b6; stroke: none; }
.c2 { fill: #d9593d; stroke: none; }
.c3 { fill: #9dbbde; stroke: none; }
.c4 { fill: #6aa88e; stroke: none; }
.c5 { fill: #e8924e; stroke: none; }
.thick { stroke: #605e5c; stroke-width: 1.600; }
.t12 { font: bold 11px Roboto, sans-serif; fill: #3e5bd8; stroke: none; text-anchor: middle; }
.k3 { stroke: #3b3a39; stroke-width: 1.6; }
.vdash { margin: 4px 5px 0 6px; border-top: 1px dashed #d9d7d5; flex: none; }
.cvis { width: 20px; height: 20px; margin: 7px 0 0 9px; flex: none; }
.cw { fill: #fff; }
.cy { fill: #ffdc52; }
.cd { stroke: #8a7a30; stroke-width: .8; stroke-dasharray: 1 .6; }
.vsep { height: 2px; background: #e8e6e4; margin-top: 11px; flex: none; }
.flab { font-size: 12px; line-height: 16px; padding-left: 13px; flex: none; color: #3b3a39; }
.lab-v { margin-top: 7px; }
.dz { margin-left: 4px; width: 170px; border: 1px dashed #c8c6c4; background: #fff; font-size: 12px; flex: none; white-space: nowrap; display: flex; align-items: center; letter-spacing: .5px; }
.dz1 { height: 27px; margin-top: 6px; padding-left: 11px; }
.dz2 { height: 25px; margin-top: 10px; padding-left: 5px; }
.lab-d { margin-top: 11px; }
.trow { display: flex; justify-content: space-between; align-items: center; height: 16px; padding: 0 5px 0 13px; font-size: 12px; flex: none; letter-spacing: .4px; }
.tr1 { margin-top: 9px; } .tr2 { margin-top: 11px; }
.tog { width: 32px; height: 16px; border: 1px solid #8a8886; border-radius: 8px; background: #fff; position: relative; }
.tog::after { content: ""; position: absolute; left: 5px; top: 3px; width: 8px; height: 8px; background: #605e5c; border-radius: 50%; }

/* fields */
.fields { width: 181px; flex: none; background: #f3f2f1; display: flex; flex-direction: column; }
.search { margin: 9px 5px 0 5px; height: 26px; background: #fff; border: 1px solid #8a8886; border-radius: 1px; display: flex; align-items: center; gap: 6px; padding-left: 7px; font-size: 14px; color: #8a8886; flex: none; }
.search svg { width: 15px; height: 15px; stroke: #605e5c; stroke-width: 1.2; }
.flist { list-style: none; margin: 10px 0 0; padding: 0 0 0 10px; }
.flist li { height: 24px; display: flex; align-items: center; font-size: 12px; color: #605e5c; white-space: nowrap; }
.fa { width: 7px; height: 12px; stroke: #605e5c; stroke-width: 1; }
.tb { width: 14px; height: 14px; stroke: #605e5c; stroke-width: 1; margin-left: 5px; margin-right: 6px; }

/* status */
.status { height: 24px; flex: none; background: #f3f2f1; border-top: 1px solid #e1dfdd; font-size: 12px; line-height: 22px; padding-left: 5px; color: #3b3a39; }
.zoombox { position: absolute; left: 1687px; top: 1013px; width: 224px; height: 26px; border: 3px solid #f00; display: flex; align-items: center; font-size: 12px; color: #605e5c; }
.zm { position: absolute; left: 12px; top: 1px; font-size: 13px; }
.slider { position: absolute; left: 22px; top: 11px; width: 100px; height: 1px; background: #8a8886; }
.slider i { position: absolute; left: 50px; top: -5px; width: 4px; height: 11px; background: #605e5c; }
.zp { position: absolute; left: 128px; top: 1px; font-size: 15px; line-height: 18px; }
.zv { position: absolute; left: 151px; top: 2px; line-height: 16px; }
.fit { position: absolute; left: 199px; top: 4px; width: 16px; height: 12px; }
.fo { stroke: #7a7876; stroke-width: 1.5; fill: #e8e6e4; }
.fi { stroke: #fff; }

/* modal */
.modal { position: absolute; left: 789px; top: 292px; width: 342px; height: 456px; background: #fff; border: 1px solid #e1dfdd; box-shadow: 3px 3px 4px rgba(0,0,0,.3); padding: 16px 24px 0 24px; z-index: 5; color: #605e5c; display: flex; flex-direction: column; }
.mclose { position: absolute; right: 8px; top: 7px; width: 12px; height: 12px; stroke: #605e5c; stroke-width: 1; }
.mtitle { margin: 0; font-size: 20.500px; line-height: 28px; color: #252423; font-weight: 700; }
.mlabel { font-size: 14.500px; line-height: 20px; margin-top: 16px; }
.mrow { height: 36px; display: flex; align-items: center; font-size: 14px; flex: none; white-space: nowrap; margin-top: 0; }
.mrow.ko { letter-spacing: .8px; margin-top: -.5px; }
.radio { width: 18px; height: 18px; border: 1px solid #605e5c; border-radius: 50%; margin-right: 8px; flex: none; }
.custom { width: 77px; height: 24px; margin-left: 10px; border: 1px solid #c8c6c4; background: #f3f2f1; color: #a19f9d; font-size: 12px; display: flex; align-items: center; padding-left: 4px; position: relative; letter-spacing: 0; }
.custom b { font-weight: 400; }
.custom em { font-style: normal; position: absolute; left: 46px; }
.custom svg { position: absolute; right: 3px; top: 1px; width: 12px; height: 20px; stroke: #8a8886; stroke-width: 1; }
.mbtns { display: flex; justify-content: flex-end; gap: 8px; margin-top: 31px; }
.mbtns button { width: 62px; height: 32px; font: 700 13.500px "Noto Sans CJK KR", sans-serif; color: #3b3a39; border-radius: 1px; padding: 0; }
.apply { background: #f2c811; border: 1px solid #f2c811; }
.cancel { background: #fff; border: 1px solid #8a8886; }
```
